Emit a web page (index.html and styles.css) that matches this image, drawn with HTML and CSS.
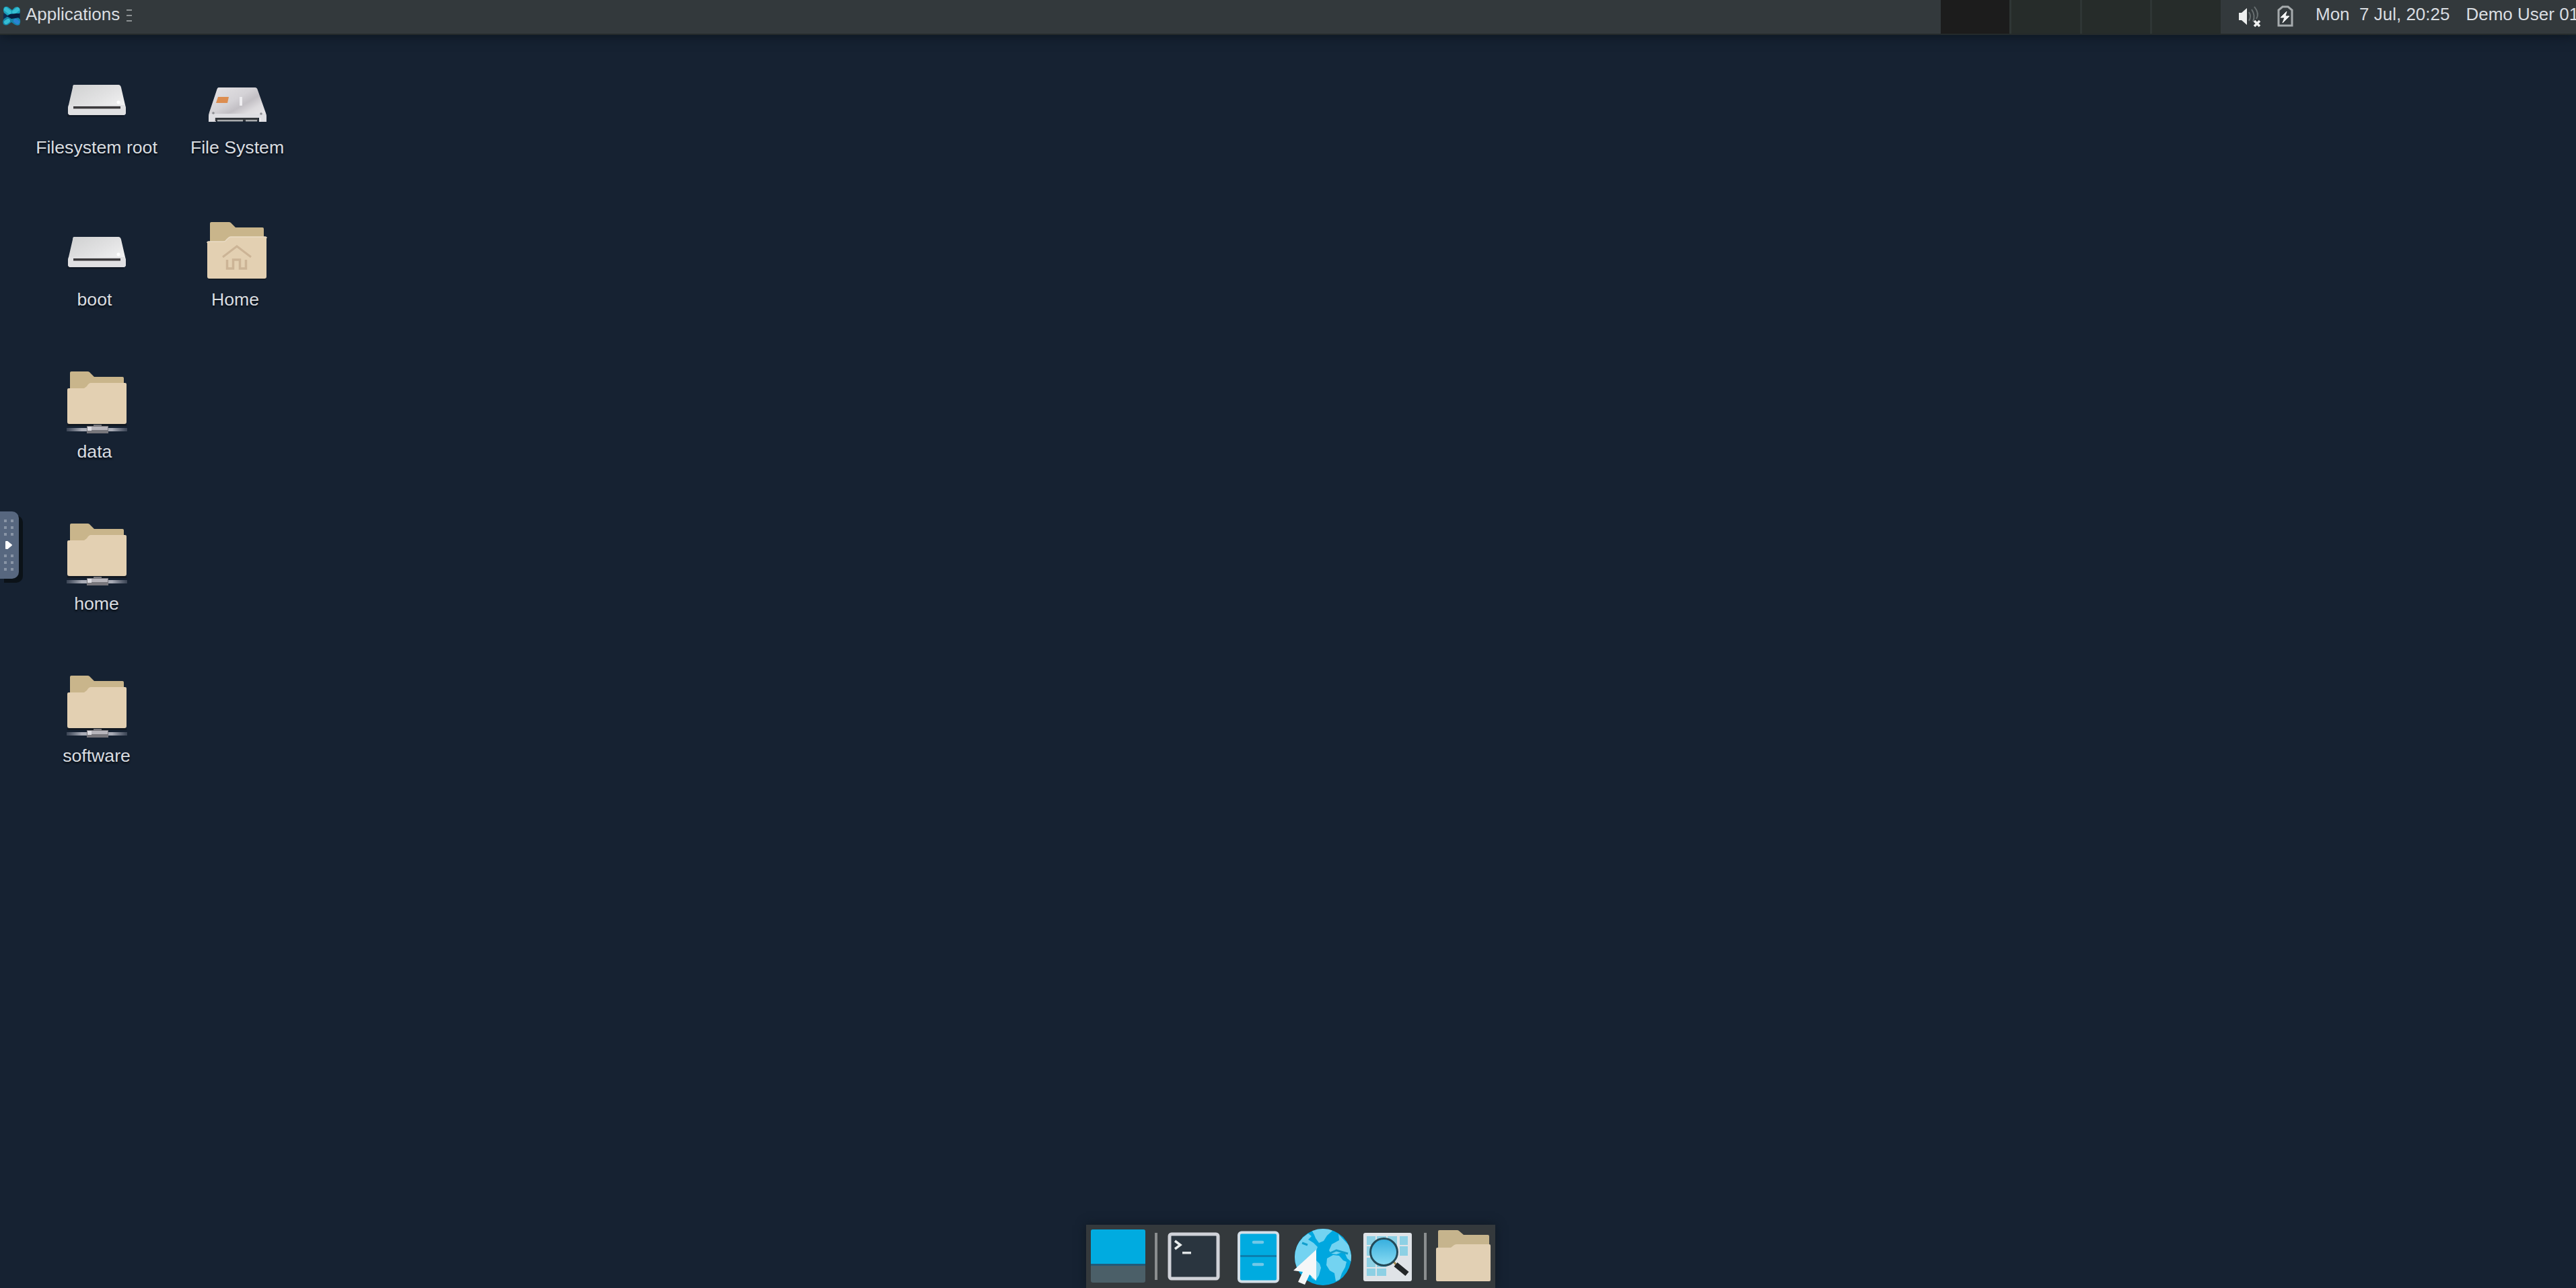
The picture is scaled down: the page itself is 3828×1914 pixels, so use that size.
FILE: index.html
```html
<!DOCTYPE html>
<html lang="en">
<head>
<meta charset="utf-8">
<title>Desktop</title>
<link rel="stylesheet" href="styles.css">
</head>
<body>
<svg class="defs" width="0" height="0" aria-hidden="true">
  <defs>
    <linearGradient id="metal" x1="0" y1="0" x2="1" y2="1">
      <stop offset="0" stop-color="#cfd0d0"/><stop offset=".5" stop-color="#e2e2e3"/><stop offset="1" stop-color="#fafafa"/>
    </linearGradient>
    <linearGradient id="ssd" x1="0" y1="0" x2="1" y2="1">
      <stop offset="0" stop-color="#e6e4e6"/><stop offset=".4" stop-color="#d4d2d6"/><stop offset=".55" stop-color="#c2bfc4"/><stop offset=".7" stop-color="#dddbde"/><stop offset="1" stop-color="#efeef0"/>
    </linearGradient>
    <linearGradient id="rod" x1="0" y1="0" x2="1" y2="0">
      <stop offset="0" stop-color="#8e93a3" stop-opacity=".3"/><stop offset=".25" stop-color="#a9acb6"/><stop offset=".75" stop-color="#a9acb6"/><stop offset="1" stop-color="#8e93a3" stop-opacity=".3"/>
    </linearGradient>
    <linearGradient id="lens" x1="0" y1="0" x2="0" y2="1">
      <stop offset="0" stop-color="#35aede"/><stop offset="1" stop-color="#8bdcf3"/>
    </linearGradient>
    <clipPath id="ball"><circle cx="48" cy="48" r="42"/></clipPath>
    <symbol id="drive" viewBox="2 0 96 96">
      <path d="M6 70h84v4H6z" fill="#101822" opacity=".6"/>
      <path d="M16 26h66q3 0 4 4l6 26q1 3 1 5v6q0 4-4 4H11q-4 0-4-4v-6q0-2 1-5l6-26q0-4 2-4z" fill="url(#metal)"/>
      <path d="M8 56h83l2 5v6q0 4-4 4H11q-4 0-4-4v-6z" fill="#e0e0e2"/>
      <path d="M15 58h70v3.500H15z" fill="#3c3a3c"/>
      <circle cx="82" cy="52" r="2.500" fill="#fff"/>
    </symbol>
    <symbol id="disk" viewBox="1 0 96 96">
      <path d="M21 30h54q3 0 4 4l12 34q1 3 1 6v5q0 2-3 2h-8v-6H17v6H9q-3 0-3-2v-6q0-3 1-6l11-33q1-4 3-4z" fill="url(#ssd)"/>
      <path d="M7 69h84l1 5v7h-8v-6H15v6H6v-7z" fill="#dedee2"/>
      <path d="M16 75h64v5H16z" fill="#33373c"/>
      <path d="M19 78h38v2.500H19zm42 0h17v2.500H61z" fill="#a9abad"/>
      <path d="M20 44h16l-2 9H17z" fill="#dc8d50"/>
      <path d="M52 44h4v13h-4z" fill="#eeedf0"/>
      <circle cx="13" cy="68" r="1.800" fill="#8d8d92"/><circle cx="84" cy="69" r="1.800" fill="#8d8d92"/>
    </symbol>
    <symbol id="folder" viewBox="0 0 96 96">
      <path d="M6 84h85v4H6z" fill="#10151b" opacity=".6"/>
      <path d="M8 36V4q0-2 2-2h26q2 0 3 1l7 7h40q2 0 2 2v26z" fill="#c9b58b"/>
      <path d="M4 33q0-2 2-2h22q3 0 4-2l3-3q2-2 4-2h51q2 0 2 2v57q0 3-3 3H7q-3 0-3-3z" fill="#e3d0b2"/>
      <path d="M4 33q0-2 2-2h22q3 0 4-2l3-3q2-2 4-2h51q2 0 2 2" fill="none" stroke="#eadcc6" stroke-width="1.500"/>
    </symbol>
    <symbol id="netfolder" viewBox="0 0 96 96">
      <path d="M8 28V2q0-2 2-2h24q2 0 3 1l7 7h42q2 0 2 2v20z" fill="#c9b58b"/>
      <path d="M4 27q0-2 2-2h23l4-3q3-5 6-5h51q2 0 2 2v56q0 3-3 3H7q-3 0-3-3z" fill="#e3d0b2"/>
      <path d="M4 78h88v3H4z" fill="#11151a" opacity=".7"/>
      <path d="M3 84h90v5H3z" fill="url(#rod)"/>
      <path d="M43 79h12v4H43zM33 81h32v11H33z" fill="#77767b"/>
      <path d="M34 82h30v5H34z" fill="#b6b4ba"/>
      <path d="M34 82h6v6h-6z" fill="#dcdbe0"/>
    </symbol>
  </defs>
</svg>

<header class="panel">
  <div class="menu">
    <svg class="logo" width="32" height="46" viewBox="0 0 32 46">
      <path d="M5 20h25v9H5z" fill="#0c2d52"/>
      <path d="M6 11q4-3 8 1l4 3 4-4q4-2 7 1 2 4 0 8l-8 3H11l-5-4q-2-4 0-8z" fill="#1b9db9"/>
      <path d="M6 28l6-4h13l5 5q1 4-1 8-4 2-8-1l-4-3-4 3q-4 3-8 0-2-4 1-8z" fill="#1585a8"/>
      <path d="M9 14l5 4M26 14l-5 4M9 33l3-2" stroke="#35bdd3" stroke-width="6" stroke-linecap="round"/>
      <path d="M26 33l-3-2" stroke="#2a83d2" stroke-width="6" stroke-linecap="round"/>
      <path d="M10 24l5-3 9-1h5v6l-12 2z" fill="#071c40"/>
    </svg>
    <span class="menu-label">Applications</span>
    <span class="grip"><i></i><i></i><i></i></span>
  </div>
  <div class="pager"><i class="current"></i><i></i><i></i><i></i></div>
  <div class="tray">
    <svg width="34" height="50" viewBox="0 0 34 50">
      <path d="M1 19h4l8-7v25l-8-7H1z" fill="#eceeee"/>
      <path d="M16 18q4 6 0 13M20 14q6 9 2 18M24 10q8 10 3 18" fill="none" stroke="#697072" stroke-width="2"/>
      <path d="M24 31l8 8M32 31l-8 8" stroke="#f1f2f2" stroke-width="3.500"/>
    </svg>
    <svg class="battery" width="26" height="50" viewBox="0 0 26 50">
      <path d="M3 38V15l6-5h8l6 5v23z" fill="none" stroke="#a6abad" stroke-width="3"/>
      <path d="M15 17L6 26h6l-3 8 10-10h-6z" fill="#f3f4f4" stroke="#f3f4f4"/>
    </svg>
    <span class="clock">Mon  7 Jul, 20:25</span>
    <span class="user">Demo User 01</span>
  </div>
</header>

<main class="desktop">
  <div class="column">
    <div class="item"><svg><use href="#drive"/></svg><span>Filesystem root</span></div>
    <div class="item"><svg><use href="#drive"/></svg><span class="nudge">boot</span></div>
    <div class="item"><svg><use href="#netfolder"/></svg><span class="nudge">data</span></div>
    <div class="item"><svg><use href="#netfolder"/></svg><span>home</span></div>
    <div class="item"><svg><use href="#netfolder"/></svg><span>software</span></div>
  </div>
  <div class="column">
    <div class="item"><svg><use href="#disk"/></svg><span>File System</span></div>
    <div class="item"><svg viewBox="1 -2 96 96"><use href="#folder" width="96" height="96"/>
      <path d="M27 54l21-16 21 16" fill="none" stroke="#ccb496" stroke-width="3"/>
      <path d="M33.500 58v13h9V58h10v13h9V58" fill="none" stroke="#ccb496" stroke-width="3.500"/>
    </svg><span class="nudge">Home</span></div>
  </div>
</main>

<aside class="handle">
  <span class="dots"><i></i><i></i><i></i><i></i><i></i><i></i></span>
  <svg width="12" height="14" viewBox="0 0 12 14"><path d="M2 2v10h2l6-5-6-5z" fill="#fff" stroke="#fff" stroke-width="2" stroke-linejoin="round"/></svg>
  <span class="dots"><i></i><i></i><i></i><i></i><i></i><i></i></span>
</aside>

<footer class="dock">
  <svg viewBox="0 0 96 94">
    <rect x="7" y="7" width="81" height="79" rx="3" fill="#4b5f68"/>
    <path d="M7 59V10q0-3 3-3h75q3 0 3 3v49z" fill="#00abe0"/>
    <path d="M7 58h81v3H7z" fill="#235a78"/>
  </svg>
  <i class="sep"></i>
  <svg viewBox="0 0 96 94">
    <rect x="12" y="14" width="72" height="66" rx="3" fill="#2a353f" stroke="#d0d2d8" stroke-width="5"/>
    <path d="M20 24l8 6-8 6" fill="none" stroke="#e8ecec" stroke-width="3.500"/>
    <path d="M31 40h13v3.500H31z" fill="#dfe3e5"/>
  </svg>
  <svg viewBox="0 0 96 94">
    <rect x="19" y="11.500" width="58" height="73" rx="4" fill="#00abe0" stroke="#d3dfe8" stroke-width="4"/>
    <path d="M21 45h54v3H21z" fill="#0a7fae"/>
    <path d="M41 26h13M41 59h13" stroke="#71c8e8" stroke-width="4.500" stroke-linecap="round"/>
  </svg>
  <svg viewBox="0 0 96 94">
    <circle cx="48" cy="48" r="42" fill="#00a7df"/>
    <g clip-path="url(#ball)" fill="#73d3f1">
      <path d="M30 6l5 9 2 5 5 7 7-3 5-8 8-7-5-6z"/>
      <path d="M6 62V34L18 19l8-6 5 4-5 5 8 5 6 6-3 8-6 5-8 5-7 8-3 7-6-4z"/>
      <path d="M37 52l6 6 2 6-3 11-5 8-6-4-3-20z"/>
      <path d="M57 38l4-9 11-6-1-9 15 16 5 18-7-4-8-3-8 3-8-1z"/>
      <path d="M54 50l9-5 9 1 6 7 5 2-2 8-5 9-3 9-6 3-2-12-7-4-5-8z"/>
      <path d="M80 41l10 4v10l-6-5z"/>
    </g>
    <path d="M17 27l8 3M59 42l9-4 10 3 7 2" fill="none" stroke="#139fcd" stroke-width="3"/>
    <path d="M38 37L4 68l14 2-7 15 10 4 7-15 10 9z" fill="#f5f7f8"/>
  </svg>
  <svg viewBox="0 0 96 94">
    <rect x="12" y="12" width="72" height="72" rx="3" fill="#dfe3e7"/>
    <path d="M17 17h13v13H17zm15 0h14v13H32zm16 0h14v13H48zm18 0h12v13H66zM17 32h13v14H17zm49 0h12v14H66zM17 49h13v14H17zm15 0h14v14H32zM17 65h13v11H17zm15 0h14v11H32z" fill="#8dd0e4"/>
    <path d="M57 55l5 6" stroke="#a58c52" stroke-width="3"/>
    <path d="M60 59l17 14" stroke="#222628" stroke-width="8"/>
    <circle cx="42.500" cy="40.500" r="20" fill="url(#lens)" stroke="#234a59" stroke-width="3"/>
  </svg>
  <i class="sep"></i>
  <svg viewBox="0 0 96 94">
    <path d="M11 40V10q0-2 2-2h26q2 0 3 1l7 6h36q2 0 2 2v20z" fill="#c6b48d"/>
    <path d="M8 36q0-2 2-2h20l5-4q2-1 4-1h48q2 0 2 2v51q0 2-2 2H10q-2 0-2-2z" fill="#e2d0b4"/>
  </svg>
</footer>
</body>
</html>
```
FILE: styles.css
```css
* { box-sizing: border-box; }

body {
  margin: 0;
  width: 100vw;
  height: 100vh;
  overflow: hidden;
  display: flex;
  flex-direction: column;
  background: #162232;
  color: #d9dde1;
  font: 26.67px/32px "Liberation Sans", Arial, sans-serif;
}

svg { display: block; flex: none; }
.defs { position: absolute; }

/* Top panel */
.panel {
  flex: none;
  height: 52px;
  display: flex;
  align-items: flex-start;
  background: #33393c;
  border-bottom: 2px solid #242a2b;
  box-shadow: 0 2px 16px #0c1620;
  font-size: 26px;
  line-height: 42px;
  white-space: pre;
}
.menu { display: flex; flex: 1; }
.menu-label { margin-left: 6px; }
.grip {
  display: flex;
  flex-direction: column;
  gap: 6px;
  margin: 14px 0 0 10px;
}
.grip i { width: 8px; height: 2px; background: #8d9294; }

.pager {
  flex: none;
  width: 416px;
  height: 50px;
  display: grid;
  grid-template-columns: 102px repeat(3, 1fr);
  background: #262c2a;
}
.pager i + i { border-left: 3px solid #2f3635; }
.pager .current { background: #1c1c1c; }

.tray {
  flex: none;
  width: 528px;
  display: flex;
  padding-left: 26px;
  overflow: hidden;
}
.battery { margin-left: 23px; }
.clock { margin-left: 32px; }
.user { margin-left: 24px; }

/* Desktop icons */
.desktop {
  flex: 1;
  display: flex;
  align-items: flex-start;
  padding: 48px 0 0 39px;
}
.column { display: flex; flex-direction: column; }
.item {
  width: 209px;
  height: 226px;
  display: flex;
  flex-direction: column;
  align-items: center;
  text-shadow: 0 2px 3px #05090d;
}
.item svg { width: 96px; height: 96px; margin-bottom: 7px; }
.item .nudge { padding-right: 6px; }

/* Side handle */
.handle {
  position: absolute;
  left: 0;
  top: 760px;
  width: 28px;
  height: 100px;
  padding: 12px 6px;
  display: flex;
  flex-direction: column;
  justify-content: space-between;
  border-radius: 0 10px 10px 0;
  background: #57677f;
  box-shadow: 6px 6px 0 #0b1218;
}
.dots {
  display: grid;
  grid-template-columns: 4px 4px;
  grid-auto-rows: 4px;
  gap: 6px;
}
.dots i { background: #8995a6; }
.handle svg { margin-left: 1px; }

/* Bottom dock */
.dock {
  flex: none;
  align-self: center;
  width: 608px;
  height: 94px;
  margin-left: 8px;
  display: flex;
  align-items: center;
  background: #34393c;
  box-shadow: 0 0 14px #0f1922;
}
.dock svg { width: 96px; height: 94px; }
.sep { width: 4px; height: 70px; margin: 0 6px; background: #8b8e8f; }
```
